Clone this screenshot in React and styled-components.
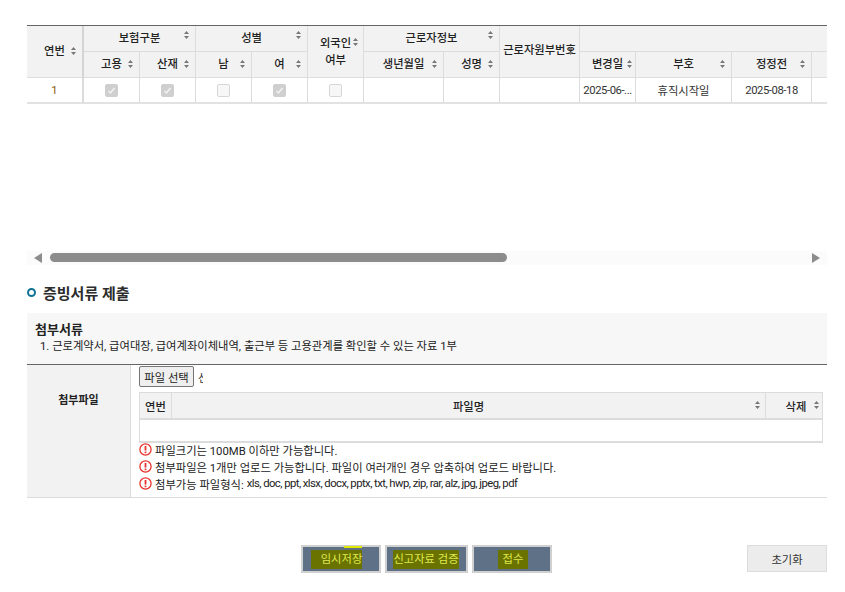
import React from "react";
import styled, { createGlobalStyle } from "styled-components";

const Global = createGlobalStyle`
  html, body { margin: 0; padding: 0; background: #fff; }
  body { font-family: Roboto, "Noto Sans CJK KR", sans-serif; font-size: 11px; color: #222; }
`;

const Page = styled.div`
  width: 800px;
  height: 592px;
  margin-left: 27px;
  padding-top: 25px;
  box-sizing: border-box;
  overflow: hidden;
`;

const GridViewport = styled.div`
  width: 800px;
  height: 226px;
  overflow: hidden;
`;

const GridTable = styled.table`
  width: 845px;
  table-layout: fixed;
  border-collapse: separate;
  border-spacing: 0;
  border-top: 1px solid #666;
`;

const Th = styled.th`
  position: relative;
  background: #f2f2f2;
  height: 26px;
  padding: 0;
  font-size: 11.3px;
  font-weight: 500;
  color: #222;
  text-align: center;
  vertical-align: middle;
  line-height: 17px;
  border-right: ${p => (p.$thick ? 2 : 1)}px solid ${p => (p.$thick ? "#d4d4d4" : "#dcdcdc")};
  border-bottom: 1px solid #dcdcdc;
  box-sizing: border-box;
`;

const Td = styled.td`
  height: 26px;
  padding: 0;
  font-size: 11.3px;
  color: ${p => (p.$accent ? "#8a5a14" : "#333")};
  text-align: center;
  vertical-align: middle;
  border-right: ${p => (p.$thick ? 2 : 1)}px solid #dcdcdc;
  border-bottom: 2px solid #e2e2e2;
  box-sizing: border-box;
  overflow: hidden;
  white-space: nowrap;
`;

const DateText = styled.span`
  letter-spacing: -0.45px;
`;

const SortWrap = styled.svg`
  position: absolute;
  right: ${p => p.$right ?? 6}px;
  top: ${p => (p.$top != null ? `${p.$top}px` : "50%")};
  margin-top: ${p => (p.$top != null ? 0 : -5)}px;
  width: 5px;
  height: 8px;
`;

const Sort = props => (
  <SortWrap viewBox="0 0 5 8" {...props}>
    <path d="M2.5 0 L5 3 H0 Z M2.5 8 L0 5 H5 Z" fill="#777" />
  </SortWrap>
);

const Check = styled.span`
  display: inline-block;
  width: 13px;
  height: 13px;
  vertical-align: middle;
  box-sizing: border-box;
  border-radius: 2px;
  border: 1px solid ${p => (p.$on ? "#cfcfcf" : "#d6d6d6")};
  background: ${p => (p.$on ? "#cfcfcf" : "#f7f7f7")};
  & svg { display: block; width: 11px; height: 11px; }
`;

const Box = ({ on }) => (
  <Check $on={on}>
    {on && (
      <svg viewBox="0 0 11 11">
        <path d="M2.5 6 L4.5 8 L8.5 3" stroke="#f2f2f2" strokeWidth="1.5" fill="none" />
      </svg>
    )}
  </Check>
);

const ScrollBar = styled.div`
  width: 800px;
  height: 14px;
  background: #fbfbfb;
  display: flex;
  align-items: center;
  justify-content: space-between;
  padding: 0 7px;
  box-sizing: border-box;
  position: relative;
`;

const Arrow = styled.span`
  width: 0;
  height: 0;
  border-top: 5px solid transparent;
  border-bottom: 5px solid transparent;
  ${p => (p.$left ? "border-right: 8px solid #8c8c8c;" : "border-left: 8px solid #8c8c8c;")}
`;

const Thumb = styled.span`
  position: absolute;
  left: 23px;
  top: 2px;
  width: 457px;
  height: 9px;
  border-radius: 5px;
  background: #8c8c8c;
`;

const SectionTitle = styled.h3`
  display: flex;
  align-items: center;
  gap: 7px;
  margin: 16px 0 0;
  height: 22px;
  font-size: 15px;
  font-weight: 700;
  color: #2c2c2c;
`;

const Bullet = styled.span`
  width: 9px;
  height: 9px;
  box-sizing: border-box;
  border: 2.5px solid #0f7396;
  border-radius: 50%;
`;

const Notice = styled.div`
  margin-top: 10px;
  height: 52px;
  background: #f7f7f7;
  padding: 8px 8px 0;
  box-sizing: border-box;
  border-bottom: 1px solid #666;
`;

const NoticeTitle = styled.div`
  font-size: 13px;
  font-weight: 700;
  line-height: 18px;
  color: #222;
`;

const NoticeText = styled.div`
  font-size: 11.3px;
  line-height: 15px;
  padding-left: 5px;
  color: #222;
`;

const FileRow = styled.div`
  display: flex;
  height: 132px;
  border-bottom: 1px solid #dcdcdc;
`;

const FileLabel = styled.div`
  width: 104px;
  flex: none;
  background: #f2f2f2;
  border-right: 1px solid #dcdcdc;
  display: flex;
  justify-content: center;
  padding-top: 26px;
  box-sizing: border-box;
  font-size: 11px;
  font-weight: 700;
  color: #222;
`;

const FileBody = styled.div`
  flex: 1;
  padding: 1px 4px 0 8px;
  min-width: 0;
`;

const PickerLine = styled.div`
  display: flex;
  align-items: center;
  gap: 4px;
  height: 21px;
`;

const PickButton = styled.button`
  width: 55px;
  height: 21px;
  padding: 0;
  font: inherit;
  font-size: 11.3px;
  color: #222;
  background: #efefef;
  border: 1px solid #767676;
  border-radius: 2px;
`;

const Clip = styled.span`
  font-size: 11px;
  width: 5px;
  overflow: hidden;
  white-space: nowrap;
  color: #333;
`;

const FileGrid = styled.div`
  margin-top: 5px;
  width: 684px;
  border: 1px solid #dcdcdc;
  border-bottom-width: 2px;
  box-sizing: border-box;
`;

const FileHead = styled.div`
  display: grid;
  grid-template-columns: 31px 1fr 57px;
  height: 27px;
  background: #f2f2f2;
  border-bottom: 2px solid #dcdcdc;
  box-sizing: border-box;
`;

const FileCell = styled.div`
  position: relative;
  display: flex;
  align-items: center;
  justify-content: center;
  font-size: 11.3px;
  font-weight: 500;
  color: #222;
  border-left: ${p => (p.$first ? "none" : "1px solid #dcdcdc")};
  padding-left: ${p => p.$pad ?? 0}px;
`;

const FileEmpty = styled.div`
  height: 21px;
`;

const Hints = styled.ul`
  list-style: none;
  margin: -2px 0 0;
  padding: 0;
`;

const Hint = styled.li`
  display: flex;
  align-items: center;
  gap: 3px;
  height: 17px;
  font-size: 11.3px;
  color: #222;
  white-space: pre;
`;

const Formats = styled.span`
  letter-spacing: -0.55px;
`;

const HintIcon = styled.svg`
  width: 13px;
  height: 13px;
  flex: none;
`;

const Warn = () => (
  <HintIcon viewBox="0 0 13 13">
    <circle cx="6.5" cy="6.5" r="5.6" fill="#fff" stroke="#e8322d" strokeWidth="1.3" />
    <rect x="5.6" y="3" width="1.8" height="4.6" fill="#e8322d" />
    <rect x="5.6" y="8.6" width="1.8" height="1.6" fill="#e8322d" />
  </HintIcon>
);

const Actions = styled.div`
  position: relative;
  display: flex;
  justify-content: center;
  gap: 4px;
  margin-top: 47px;
  padding-right: 2px;
  height: 28px;
`;

const DarkButton = styled.button`
  width: ${p => p.$w}px;
  height: 28px;
  padding: 0;
  font: inherit;
  font-size: 11.3px;
  color: #f0f060;
  background: #5f7186;
  border: 2px solid #d0d0d0;
  display: flex;
  align-items: center;
  justify-content: center;
  box-sizing: border-box;
`;

const Mark = styled.span`
  position: relative;
  margin-left: ${p => p.$m ?? 0}px;
  background: #6b7300;
  color: #dfe84a;
  padding: 2px ${p => p.$x ?? 0}px 2px ${p => p.$l ?? p.$x ?? 0}px;
  line-height: 15px;
  ${p => p.$flag && `
    &::after {
      content: "";
      position: absolute;
      right: 0;
      top: -4px;
      width: 18px;
      height: 2px;
      background: #dfe800;
    }
  `}
`;

const ResetButton = styled.button`
  position: absolute;
  right: 0;
  top: 0;
  width: 80px;
  height: 27px;
  padding: 0;
  font: inherit;
  font-size: 11.3px;
  color: #333;
  background: #ececec;
  border: 1px solid #dcdcdc;
  box-sizing: border-box;
`;

const widths = [57, 56, 56, 56, 56, 56, 80, 56, 80, 56, 96, 80, 60];

export default function App() {
  return (
    <>
      <Global />
      <Page>
        <GridViewport>
          <GridTable>
            <colgroup>
              {widths.map((w, i) => (
                <col key={i} style={{ width: w }} />
              ))}
            </colgroup>
            <thead>
              <tr>
                <Th rowSpan={2} $thick>연번<Sort /></Th>
                <Th colSpan={2}>보험구분<Sort $top={5} /></Th>
                <Th colSpan={2}>성별<Sort $top={5} /></Th>
                <Th rowSpan={2}>
                  외국인<br />여부
                  <Sort $top={12} $right={5} />
                </Th>
                <Th colSpan={2}>근로자정보<Sort $top={5} /></Th>
                <Th rowSpan={2} style={{ paddingBottom: 3 }}>근로자원부번호<Sort /></Th>
                <Th colSpan={4} style={{ borderRight: "none" }} />
              </tr>
              <tr>
                <Th>고용<Sort /></Th>
                <Th>산재<Sort /></Th>
                <Th>남<Sort /></Th>
                <Th>여<Sort /></Th>
                <Th>생년월일<Sort /></Th>
                <Th>성명<Sort /></Th>
                <Th>변경일<Sort $right={3} /></Th>
                <Th>부호<Sort /></Th>
                <Th>정정전<Sort /></Th>
                <Th style={{ borderRight: "none" }} />
              </tr>
            </thead>
            <tbody>
              <tr>
                <Td $thick $accent>1</Td>
                <Td><Box on /></Td>
                <Td><Box on /></Td>
                <Td><Box /></Td>
                <Td><Box on /></Td>
                <Td><Box /></Td>
                <Td />
                <Td />
                <Td />
                <Td><DateText>2025-06-...</DateText></Td>
                <Td>휴직시작일</Td>
                <Td><DateText>2025-08-18</DateText></Td>
                <Td style={{ borderRight: "none" }} />
              </tr>
            </tbody>
          </GridTable>
        </GridViewport>
        <ScrollBar>
          <Arrow $left />
          <Thumb />
          <Arrow />
        </ScrollBar>
        <SectionTitle><Bullet />증빙서류 제출</SectionTitle>
        <Notice>
          <NoticeTitle>첨부서류</NoticeTitle>
          <NoticeText>1. 근로계약서, 급여대장, 급여계좌이체내역, 출근부 등 고용관계를 확인할 수 있는 자료 1부</NoticeText>
        </Notice>
        <FileRow>
          <FileLabel>첨부파일</FileLabel>
          <FileBody>
            <PickerLine>
              <PickButton>파일 선택</PickButton>
              <Clip>선택</Clip>
            </PickerLine>
            <FileGrid>
              <FileHead>
                <FileCell $first>연번</FileCell>
                <FileCell>파일명<Sort $right={5} /></FileCell>
                <FileCell $pad={4}>삭제<Sort $right={3} /></FileCell>
              </FileHead>
              <FileEmpty />
            </FileGrid>
            <Hints>
              <Hint><Warn />파일크기는 100MB 이하만 가능합니다.</Hint>
              <Hint><Warn />첨부파일은 1개만 업로드 가능합니다. 파일이 여러개인 경우 압축하여 업로드 바랍니다.</Hint>
              <Hint><Warn />첨부가능 파일형식:<Formats>xls, doc, ppt, xlsx, docx, pptx, txt, hwp, zip, rar, alz, jpg, jpeg, pdf</Formats></Hint>
            </Hints>
          </FileBody>
        </FileRow>
        <Actions>
          <DarkButton $w={80}><Mark $l={10} $m={-8} $flag>임시저장</Mark></DarkButton>
          <DarkButton $w={83}><Mark>신고자료 검증</Mark></DarkButton>
          <DarkButton $w={80}><Mark $x={5} $m={3}>접수</Mark></DarkButton>
          <ResetButton>초기화</ResetButton>
        </Actions>
      </Page>
    </>
  );
}
